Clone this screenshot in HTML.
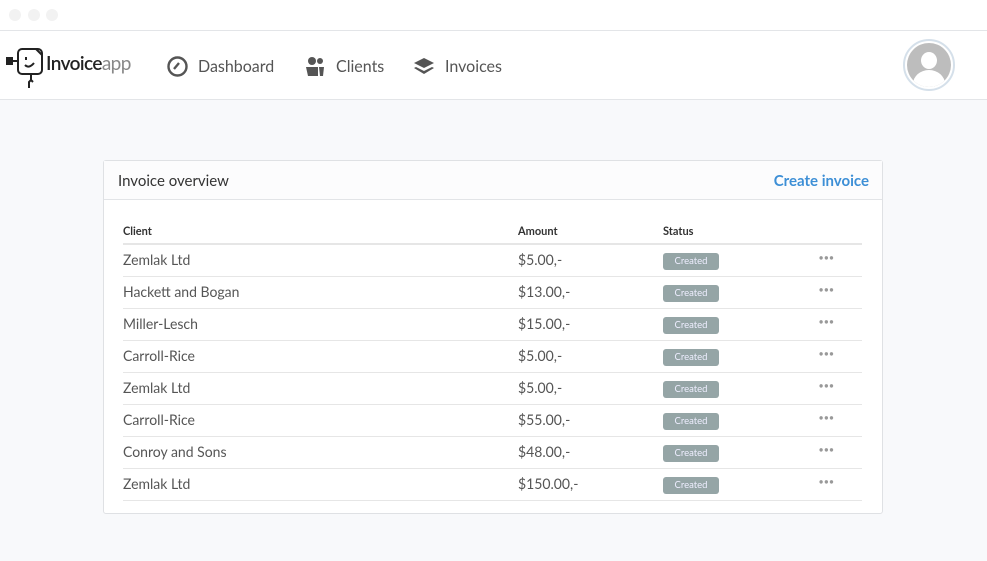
<!DOCTYPE html>
<html><head><meta charset="utf-8"><style>
*{box-sizing:border-box;margin:0;padding:0}
body{width:987px;height:561px;overflow:hidden;background:#f8f9fb;font-family:"Lato","Liberation Sans",sans-serif;position:relative}
.top{position:absolute;left:0;top:0;width:987px;height:31px;background:#fff;border-bottom:1px solid #e3e5e8}
.dot{position:absolute;top:9px;width:12px;height:12px;border-radius:50%;background:#f2f2f2}
.hdr{position:absolute;left:0;top:31px;width:987px;height:69px;background:#fff;border-bottom:1px solid #e3e5e8}
.nav{position:absolute;top:25px;font-size:16px;color:#555;display:flex;align-items:center}
.nav svg{margin-right:10px}
.card{position:absolute;left:103px;top:160px;width:780px;height:354px;background:#fff;border:1px solid #dfe1e4;border-radius:3px}
.ch{height:39px;border-bottom:1px solid #e2e4e7;background:#fcfcfd;position:relative}
.ch .t{position:absolute;left:14px;top:11px;font-size:15px;color:#333}
.ch .c{position:absolute;right:13px;top:11px;font-size:15px;color:#3d8fd6;font-weight:bold}
.th{position:absolute;top:64px;font-size:11px;font-weight:bold;color:#333}
.hl{position:absolute;left:19px;top:82px;width:739px;height:2px;background:#e6e6e6}
.row{position:absolute;left:19px;width:739px;height:32px;border-bottom:1px solid #e6e6e6;font-size:14px;color:#555}
.row span{position:absolute;top:6px}
.b{position:absolute;left:540px;top:8px;width:56px;height:17px;border-radius:3px;background:#95a5a6;color:#eef;font-size:9.5px;text-align:center;line-height:17px}
.d{position:absolute;left:696px;top:9px;color:#999;font-size:7px;letter-spacing:1px}
</style></head><body>
<div class="top"><div class="dot" style="left:9px"></div><div class="dot" style="left:28px"></div><div class="dot" style="left:46px"></div></div>
<div class="hdr">
 <svg style="position:absolute;left:6px;top:14px" width="40" height="46" viewBox="0 0 40 46" fill="none" stroke="#222" stroke-width="2">
  <rect x="1" y="13" width="5" height="6" fill="#222"/><path d="M6 16h6"/>
  <rect x="12" y="4" width="24" height="25" rx="4"/><path d="M30 4l6 6"/>
  <path d="M20 12v3M19 20q4 4 9-2"/><path d="M25 29v6l-2 2v6M25 35l2 2"/>
 </svg>
 <div style="position:absolute;left:46px;top:21px;font-size:19px;letter-spacing:-0.6px"><span style="color:#222;font-weight:600">Invoice</span><span style="color:#888">app</span></div>
 <div class="nav" style="left:167px"><svg width="21" height="21" viewBox="0 0 21 21"><circle cx="10.5" cy="10.5" r="9" fill="none" stroke="#555" stroke-width="2.4"/><path d="M7 13l5-6" stroke="#555" stroke-width="2.4"/></svg>Dashboard</div>
 <div class="nav" style="left:305px"><svg width="21" height="21" viewBox="0 0 21 21" fill="#555"><circle cx="7" cy="5" r="4"/><circle cx="15" cy="5" r="3"/><path d="M1 11h12v9H3z"/><path d="M14 11h5l-1 9h-3z"/></svg>Clients</div>
 <div class="nav" style="left:413px"><svg width="22" height="21" viewBox="0 0 22 21" fill="#555"><path d="M11 2l10 5-10 5-10-5z"/><path d="M3 11l8 4 8-4 2 1-10 6-10-6z"/></svg>Invoices</div>
 <div style="position:absolute;left:903px;top:8px;width:52px;height:52px;border-radius:50%;border:2px solid #d5e0ea;padding:2px;background:#fff"><div style="width:44px;height:44px;border-radius:50%;background:#bdbdbd;position:relative;overflow:hidden"><div style="position:absolute;left:14px;top:9px;width:16px;height:17px;border-radius:50%;background:#fff"></div><div style="position:absolute;left:6px;top:27px;width:32px;height:28px;border-radius:50%;background:#fff"></div></div></div>
</div>
<div class="card">
 <div class="ch"><span class="t">Invoice overview</span><span class="c">Create invoice</span></div>
 <span class="th" style="left:19px">Client</span><span class="th" style="left:414px">Amount</span><span class="th" style="left:559px">Status</span>
 <div class="hl"></div>
 <div class="row" style="top:84px"><span style="left:0">Zemlak Ltd</span><span style="left:395px">$5.00,-</span><div class="b">Created</div><div class="d">●●●</div></div>
 <div class="row" style="top:116px"><span style="left:0">Hackett and Bogan</span><span style="left:395px">$13.00,-</span><div class="b">Created</div><div class="d">●●●</div></div>
 <div class="row" style="top:148px"><span style="left:0">Miller-Lesch</span><span style="left:395px">$15.00,-</span><div class="b">Created</div><div class="d">●●●</div></div>
 <div class="row" style="top:180px"><span style="left:0">Carroll-Rice</span><span style="left:395px">$5.00,-</span><div class="b">Created</div><div class="d">●●●</div></div>
 <div class="row" style="top:212px"><span style="left:0">Zemlak Ltd</span><span style="left:395px">$5.00,-</span><div class="b">Created</div><div class="d">●●●</div></div>
 <div class="row" style="top:244px"><span style="left:0">Carroll-Rice</span><span style="left:395px">$55.00,-</span><div class="b">Created</div><div class="d">●●●</div></div>
 <div class="row" style="top:276px"><span style="left:0">Conroy and Sons</span><span style="left:395px">$48.00,-</span><div class="b">Created</div><div class="d">●●●</div></div>
 <div class="row" style="top:308px"><span style="left:0">Zemlak Ltd</span><span style="left:395px">$150.00,-</span><div class="b">Created</div><div class="d">●●●</div></div>
</div>
</body></html>
